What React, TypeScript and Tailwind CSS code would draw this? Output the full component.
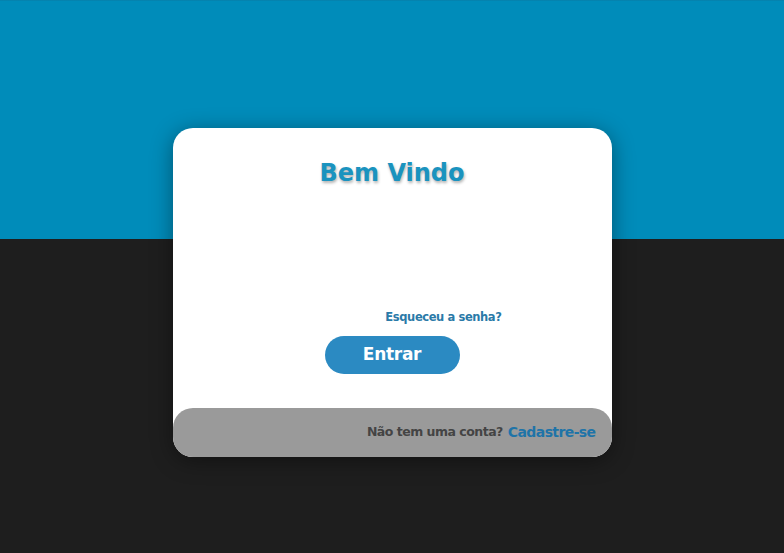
export default function App() {
  return (
    <div
      className="h-[553px] w-full flex justify-center pt-[128px] bg-[linear-gradient(to_bottom,#0a7aa3_0px,#008cba_1px,#008cba_239px,#1e1e1e_239px)]"
      style={{ fontFamily: '"DejaVu Sans", Verdana, sans-serif' }}
    >
      <div className="w-[439px] h-[329px] bg-white rounded-[20px] shadow-[0_4px_22px_rgba(0,0,0,0.4)] flex flex-col">
        {/* Title */}
        <h1 className="pt-[29px] text-center text-[24px] leading-[32px] font-bold text-[#1a93bf] [text-shadow:1px_2px_3px_rgba(0,0,0,0.3)]">
          Bem Vindo
        </h1>

        {/* Form area */}
        <div className="mt-[120px] flex justify-end pr-[110px]">
          <a href="#" className="text-[11.5px] leading-4 tracking-[-0.4px] font-bold text-[#2a7aa8]">
            Esqueceu a senha?
          </a>
        </div>
        <div className="mt-[11px] flex justify-center">
          <button className="w-[135px] h-[38px] rounded-full bg-[#2b8ac2] text-white text-[17px] tracking-[-0.3px] font-bold">
            Entrar
          </button>
        </div>

        {/* Footer */}
        <div className="mt-auto h-[49px] rounded-[20px] bg-[#9a9a9a] flex items-center justify-end pr-[16px]">
          <span className="text-[12.5px] tracking-[-0.5px] font-bold text-[#444444]">Não tem uma conta?</span>
          <a href="#" className="ml-[5px] text-[14px] tracking-[-0.6px] font-bold text-[#1f74a8]">
            Cadastre-se
          </a>
        </div>
      </div>
    </div>
  )
}
